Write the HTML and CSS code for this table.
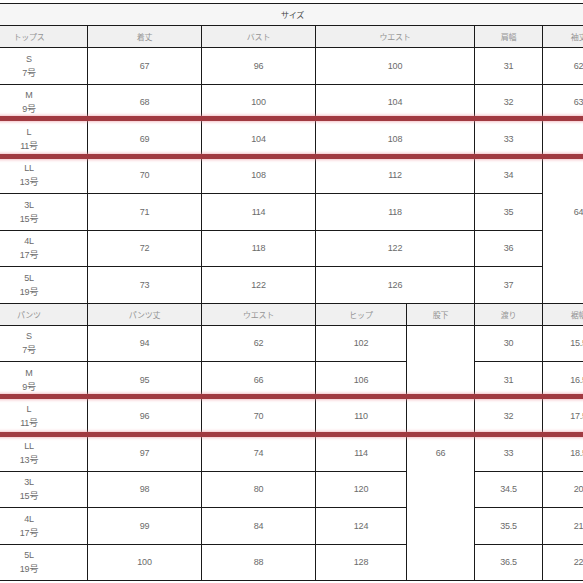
FILE: index.html
```html
<!DOCTYPE html>
<html lang="ja">
<head>
<meta charset="utf-8">
<title>サイズ</title>
<link rel="stylesheet" href="styles.css">
</head>
<body>
<div class="sheet">
  <table class="chart">
    <colgroup>
      <col class="c-size"><col class="c-wide"><col class="c-wide"><col class="c-mid"><col class="c-narrow"><col class="c-narrow"><col class="c-last">
    </colgroup>
    <tr class="title"><td colspan="7">サイズ</td></tr>
    <tr class="head"><th>トップス</th><th>着丈</th><th>バスト</th><th colspan="2">ウエスト</th><th>肩幅</th><th>袖丈</th></tr>
    <tr class="row"><td class="size">S<br>7号</td><td>67</td><td>96</td><td colspan="2">100</td><td>31</td><td>62</td></tr>
    <tr class="row"><td class="size">M<br>9号</td><td>68</td><td>100</td><td colspan="2">104</td><td>32</td><td>63</td></tr>
    <tr class="row"><td class="size">L<br>11号</td><td>69</td><td>104</td><td colspan="2">108</td><td>33</td><td rowspan="5">64</td></tr>
    <tr class="row"><td class="size">LL<br>13号</td><td>70</td><td>108</td><td colspan="2">112</td><td>34</td></tr>
    <tr class="row"><td class="size">3L<br>15号</td><td>71</td><td>114</td><td colspan="2">118</td><td>35</td></tr>
    <tr class="row"><td class="size">4L<br>17号</td><td>72</td><td>118</td><td colspan="2">122</td><td>36</td></tr>
    <tr class="row"><td class="size">5L<br>19号</td><td>73</td><td>122</td><td colspan="2">126</td><td>37</td></tr>
    <tr class="head"><th>パンツ</th><th>パンツ丈</th><th>ウエスト</th><th>ヒップ</th><th>股下</th><th>渡り</th><th>裾幅</th></tr>
    <tr class="row"><td class="size">S<br>7号</td><td>94</td><td>62</td><td>102</td><td rowspan="7">66</td><td>30</td><td>15.5</td></tr>
    <tr class="row"><td class="size">M<br>9号</td><td>95</td><td>66</td><td>106</td><td>31</td><td>16.5</td></tr>
    <tr class="row"><td class="size">L<br>11号</td><td>96</td><td>70</td><td>110</td><td>32</td><td>17.5</td></tr>
    <tr class="row"><td class="size">LL<br>13号</td><td>97</td><td>74</td><td>114</td><td>33</td><td>18.5</td></tr>
    <tr class="row"><td class="size">3L<br>15号</td><td>98</td><td>80</td><td>120</td><td>34.5</td><td>20</td></tr>
    <tr class="row"><td class="size">4L<br>17号</td><td>99</td><td>84</td><td>124</td><td>35.5</td><td>21</td></tr>
    <tr class="row"><td class="size">5L<br>19号</td><td>100</td><td>88</td><td>128</td><td>36.5</td><td>22</td></tr>
  </table>
  <div class="mark mark-top-a"></div>
  <div class="mark mark-top-b"></div>
  <div class="mark mark-pants-a"></div>
  <div class="mark mark-pants-b"></div>
</div>
</body>
</html>
```

FILE: styles.css
```css
html, body {
  margin: 0;
  padding: 0;
  background: #ffffff;
  overflow: hidden;
}

.sheet {
  position: relative;
  width: 644px;
  margin-left: -30px;
  padding-top: 3px;
}

.chart {
  width: 644px;
  table-layout: fixed;
  border-collapse: collapse;
  font-family: "Liberation Sans", "Noto Sans CJK JP", sans-serif;
  font-size: 9px;
  letter-spacing: -0.2px;
  color: #6b6b6b;
}

.c-size { width: 117px; }
.c-wide { width: 114px; }
.c-mid { width: 91px; }
.c-narrow { width: 68px; }
.c-last { width: 72px; }

.chart td,
.chart th {
  border: 1px solid #1a1a1a;
  padding: 0;
  text-align: center;
  vertical-align: middle;
  font-weight: normal;
}

.title td {
  height: 21px;
  background: #f6f6f6;
  color: #444444;
  font-size: 8px;
  border-left: none;
  border-right: none;
}

.head th {
  height: 21px;
  background: #f0f0f0;
  color: #959595;
  font-size: 8px;
}

.row td {
  height: 35.5px;
}

.size {
  line-height: 14px;
}

.mark {
  position: absolute;
  left: 0;
  right: 0;
  height: 5px;
  background: #a13a41;
  box-shadow: 0 0 3px 1px rgba(235, 140, 150, 0.55);
}

.mark-top-a { top: 116px; }
.mark-top-b { top: 154px; }
.mark-pants-a { top: 394px; }
.mark-pants-b { top: 432px; }
```
